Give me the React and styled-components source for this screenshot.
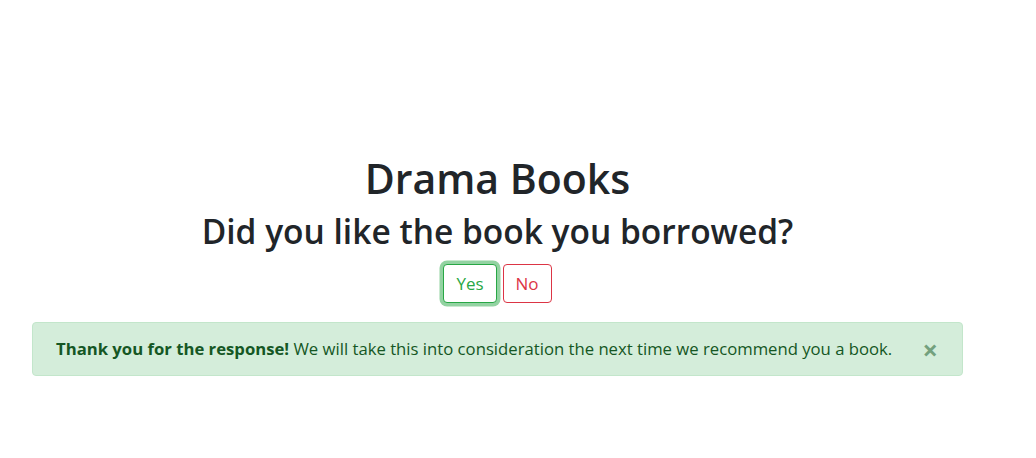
import React, {useState} from 'react';
import styled, {createGlobalStyle} from 'styled-components';

const GlobalStyle = createGlobalStyle`
    * { box-sizing : border-box; }
    body {
        margin : 0;
        background : #fff;
        color : #212529;
        font-family : "Open Sans", "Noto Sans", sans-serif;
        font-size : 16.7px;
        line-height : 27px;
    }
`;

const Page = styled.div`
    width : 995px;
    padding : 154px 0 0 0;
    display : flex;
    flex-direction : column;
    align-items : center;
`;

const Title = styled.h1`
    margin : 0 0 9px 0;
    font-size : 41px;
    font-weight : 600;
    line-height : 1.2;
`;

const Question = styled.h2`
    margin : 0 0 12px 0;
    font-size : 33.5px;
    font-weight : 600;
    line-height : 39.6px;
`;

const Buttons = styled.div`
    display : flex;
    gap : 6px;
    margin-bottom : 19px;
`;

const OutlineButton = styled.button`
    font-family : inherit;
    font-size : 17px;
    line-height : 25px;
    padding : 6px 12px;
    background : #fff;
    color : ${p => p.color};
    border : 1px solid ${p => p.color};
    border-radius : 4px;
    cursor : pointer;
    box-shadow : ${p => p.focused ? `0 0 0 3.5px ${p.ring}` : 'none'};
`;

const Alert = styled.div`
    position : relative;
    align-self : flex-start;
    margin-left : 32px;
    width : 931px;
    padding : 12px 64px 13px 23px;
    background : #d4edda;
    border : 1px solid #c3e6cb;
    border-radius : 4px;
    color : #155724;
`;

const Close = styled.button`
    position : absolute;
    top : 0;
    right : 0;
    padding : 13px 24px 12px 24px;
    background : transparent;
    border : 0;
    font-family : inherit;
    font-size : 27px;
    font-weight : 700;
    line-height : 1;
    color : inherit;
    opacity : 0.5;
    cursor : pointer;
`;

const App = () => {
    const [answer, setAnswer] = useState('yes');
    const [open, setOpen] = useState(true);

    return (
        <Page>
            <GlobalStyle />
            <Title>Drama Books</Title>
            <Question>Did you like the book you borrowed?</Question>
            <Buttons>
                <OutlineButton color="#28a745" ring="rgba(40,167,69,.5)" focused={answer === 'yes'}
                    onClick={() => setAnswer('yes')}>Yes</OutlineButton>
                <OutlineButton color="#dc3545" ring="rgba(220,53,69,.5)" focused={answer === 'no'}
                    onClick={() => setAnswer('no')}>No</OutlineButton>
            </Buttons>
            {open && (
                <Alert>
                    <strong>Thank you for the response!</strong> We will take this into consideration the next time we recommend you a book.
                    <Close onClick={() => setOpen(false)}>×</Close>
                </Alert>
            )}
        </Page>
    );
}

export default App
